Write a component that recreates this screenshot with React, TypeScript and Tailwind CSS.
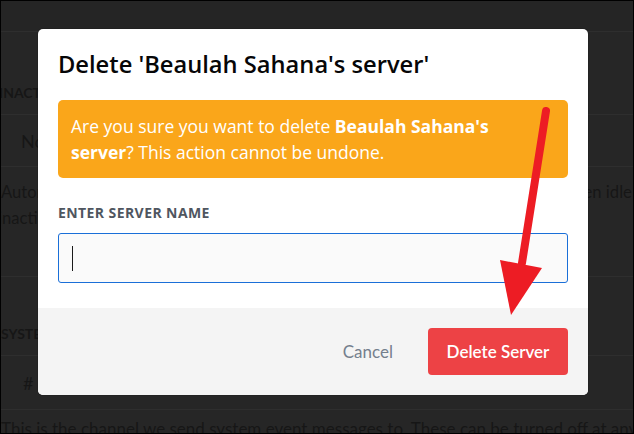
import type { FC } from "react"

const sans = "font-['Lato','Noto_Sans',sans-serif]"
const wide = "font-['Open_Sans','Noto_Sans',sans-serif]"

const Divider: FC<{ className?: string }> = ({ className = "" }) => (
  <div className={`h-px w-full shrink-0 bg-[#2e2e2e] ${className}`} />
)

// dimmed settings page that sits behind the modal
function Backdrop() {
  return (
    <div className={`flex h-full w-full flex-col overflow-hidden text-[#161616] ${sans}`}>
      <div className="h-[30px] shrink-0 bg-[#252525]" />
      <Divider />
      <div className="-ml-[2px] flex h-[82px] shrink-0 items-end pb-[14px]">
        <span className="text-[14px] font-bold uppercase leading-none">Inactive Channel</span>
      </div>
      <Divider />
      <div className="flex h-[51px] shrink-0 items-center pl-[20px]">
        <span className="text-[18px] leading-none">No Inactive Channel</span>
      </div>
      <Divider />
      <div className="mt-[12px] shrink-0 whitespace-nowrap text-[16.6px] leading-[26px]">
        <div>Automatically move members to this channel and mute them when they have been idle</div>
        <div className="-ml-[3px]">inactive timeout, they will be moved to this channel and muted.</div>
      </div>
      <Divider className="mt-[45px]" />
      <div className="flex h-[78px] shrink-0 items-end pb-[14px]">
        <span className="text-[14px] font-bold uppercase leading-none">System Messages Channel</span>
      </div>
      <Divider />
      <div className="flex h-[53px] shrink-0 items-center pl-[22px]">
        <span className="text-[18px] leading-none">#&nbsp;general</span>
      </div>
      <Divider />
      <div className="mt-[8px] shrink-0 whitespace-nowrap text-[17px] leading-[22px]">
        This is the channel we send system event messages to. These can be turned off at any time.
      </div>
    </div>
  )
}

function DeleteModal() {
  return (
    <div className="absolute left-[37px] top-[28px] w-[550px] overflow-hidden rounded-[5px] bg-white shadow-[0_0_0_1px_rgba(0,0,0,0.1)]">
      <div className="px-5 pt-[21px]">
        <h2 className={`text-[23.7px] font-semibold leading-[28px] text-[#060607] ${wide}`}>
          Delete 'Beaulah Sahana's server'
        </h2>
        <div className={`mt-[22px] rounded-[5px] bg-[#faa61a] px-[13px] py-[13px] text-[17.5px] leading-[26px] text-white ${wide}`}>
          Are you sure you want to delete <strong className="font-bold">Beaulah Sahana's</strong>
          <br />
          <strong className="font-bold">server</strong>? This action cannot be undone.
        </div>
        <label className={`mt-[27px] block text-[14px] font-bold uppercase leading-[16px] tracking-[0.03em] text-[#4f5660] ${wide}`}>
          Enter Server Name
        </label>
        <div className="mt-[12px] flex h-[50px] items-center rounded-[3px] border border-[#1a6fd8] bg-[#fafafa] px-[13px]">
          <span className="h-[25px] w-px bg-[#1a1a1a]" />
        </div>
      </div>
      <div className={`mt-[25px] flex h-[87px] items-center justify-end gap-[35px] bg-[#f4f4f4] px-5 ${sans}`}>
        <button type="button" className="text-[17px] text-[#747f8d]">
          Cancel
        </button>
        <button
          type="button"
          className="flex h-[47px] w-[140px] items-center justify-center rounded-[4px] bg-[#ed4245] text-[17px] font-semibold text-white"
        >
          Delete Server
        </button>
      </div>
    </div>
  )
}

function Arrow() {
  return (
    <svg className="pointer-events-none absolute inset-0" width="634" height="434" viewBox="0 0 634 434">
      <line x1="545" y1="110" x2="521" y2="262" stroke="#ed1c24" strokeWidth="8" strokeLinecap="round" />
      <polygon points="499,259 541,267 510,314" fill="#ed1c24" />
    </svg>
  )
}

export default function App() {
  return (
    <div className="relative h-[434px] w-[634px] overflow-hidden border border-black bg-[#262626]">
      <Backdrop />
      <DeleteModal />
      <Arrow />
    </div>
  )
}
